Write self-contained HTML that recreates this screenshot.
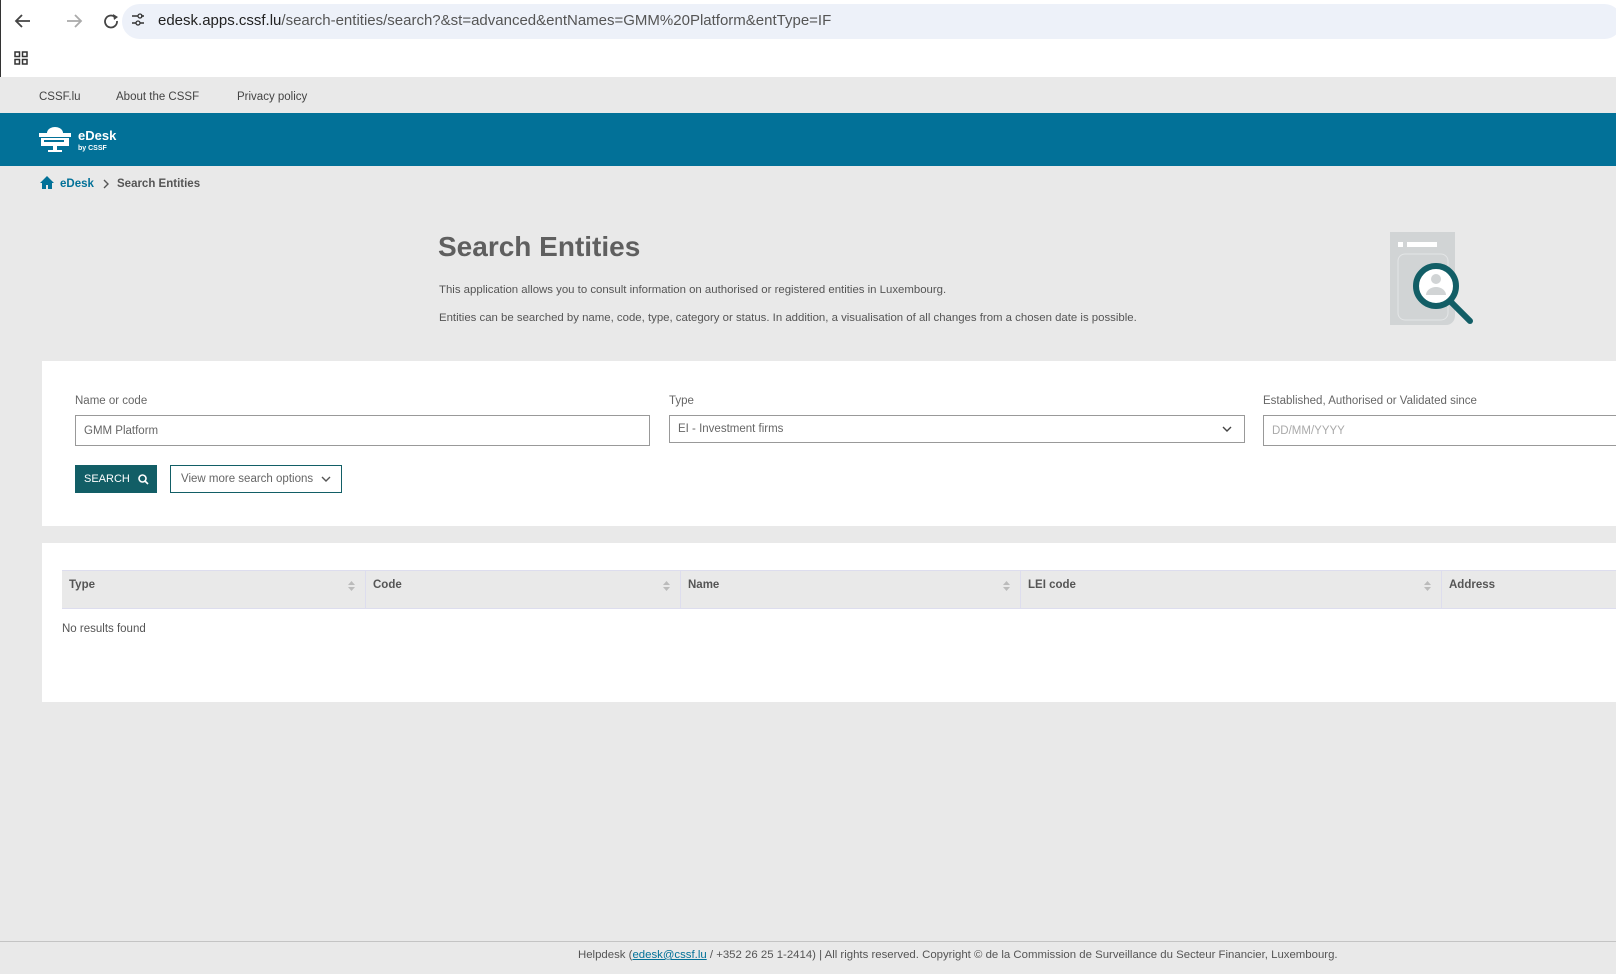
<!DOCTYPE html>
<html><head><meta charset="utf-8">
<style>
*{box-sizing:border-box;margin:0;padding:0}
body{width:1616px;height:974px;overflow:hidden;background:#e9e9e9;font-family:"Liberation Sans",sans-serif;color:#555;position:relative}
.abs{position:absolute}
.chrome{left:0;top:0;width:1616px;height:77px;background:#fff;border-left:1px solid #333}
.url{left:122px;top:4px;width:1500px;height:35px;background:#edf1f9;border-radius:18px}
.nav{left:0;top:77px;width:1616px;height:36px;background:#e9e9e9;font-size:11.5px;color:#444}
.hdr{left:0;top:113px;width:1616px;height:53px;background:#027198}
.card{background:#fff}
label{position:absolute;font-size:11.5px;color:#666}
.inp{position:absolute;border:1px solid #999;background:#fff;font-size:11.5px;color:#666;padding-left:8px;display:flex;align-items:center}
.th{position:absolute;top:0;height:38px;border-right:1px solid #dde;font-size:11.5px;font-weight:bold;color:#555;padding:8px 0 0 7px}
.sort{position:absolute;right:10px;top:9px;width:7px}
</style></head><body>
<div class="abs chrome"></div>
<div class="abs url"></div>
<svg class="abs" style="left:14px;top:12px" width="110" height="18" viewBox="0 0 110 18">
<path d="M16 9H3M8 3L2 9l6 6" stroke="#444" stroke-width="1.8" fill="none"/>
<path d="M53 9h13M61 3l6 6-6 6" stroke="#aaa" stroke-width="1.8" fill="none"/>
<path d="M101 5a6 6 0 1 0 2 4" stroke="#444" stroke-width="1.8" fill="none"/><path d="M99 2l5 3-4 3z" fill="#444"/>
</svg>
<svg class="abs" style="left:130px;top:12px" width="16" height="16"><path d="M2 4h6M2 11h4M11 4h3M10 11h4" stroke="#333" stroke-width="1.5"/><circle cx="10" cy="4" r="2" fill="none" stroke="#333" stroke-width="1.3"/><circle cx="8" cy="11" r="2" fill="none" stroke="#333" stroke-width="1.3"/></svg>
<div class="abs" style="left:158px;top:12px;font-size:15px;color:#222">edesk.apps.cssf.lu<span style="color:#555">/search-entities/search?&amp;st=advanced&amp;entNames=GMM%20Platform&amp;entType=IF</span></div>
<svg class="abs" style="left:14px;top:51px" width="14" height="14"><g fill="none" stroke="#333" stroke-width="1.5"><rect x="1" y="1" width="4.5" height="4.5"/><rect x="8.5" y="1" width="4.5" height="4.5"/><rect x="1" y="8.5" width="4.5" height="4.5"/><rect x="8.5" y="8.5" width="4.5" height="4.5"/></g></svg>
<div class="abs nav"><span class="abs" style="left:39px;top:14px">CSSF.lu</span><span class="abs" style="left:116px;top:14px">About the CSSF</span><span class="abs" style="left:237px;top:14px">Privacy policy</span></div>
<div class="abs hdr">
<svg class="abs" style="left:38px;top:13px" width="34" height="28" viewBox="0 0 34 28"><path d="M9 7a8 6 0 0 1 16 0z" fill="#fff"/><rect x="1" y="7" width="32" height="4" fill="#fff"/><rect x="3" y="12" width="28" height="8" fill="#fff"/><rect x="6" y="14" width="20" height="2" fill="#027198"/><rect x="15" y="20" width="4" height="4" fill="#fff"/><rect x="10" y="24" width="14" height="2" fill="#fff"/></svg>
<div class="abs" style="left:78px;top:15px;color:#fff;font-weight:bold;font-size:13px">eDesk</div>
<div class="abs" style="left:78px;top:32px;color:#fff;font-size:7px;font-weight:bold">by CSSF</div>
</div>
<svg class="abs" style="left:40px;top:176px" width="14" height="13"><path d="M7 0L0 7h2v6h4V9h2v4h4V7h2z" fill="#027198"/></svg>
<div class="abs" style="left:60px;top:178px;font-size:11.5px;font-weight:bold;color:#027198">eDesk</div>
<svg class="abs" style="left:102px;top:179px" width="8" height="10"><path d="M2 1l4 4-4 4" stroke="#555" stroke-width="1.4" fill="none"/></svg>
<div class="abs" style="left:117px;top:178px;font-size:11.5px;font-weight:bold;color:#555">Search Entities</div>
<div class="abs" style="left:438px;top:231px;font-size:28px;font-weight:bold;color:#5f5f5f">Search Entities</div>
<div class="abs" style="left:439px;top:284px;font-size:11.4px;color:#555">This application allows you to consult information on authorised or registered entities in Luxembourg.</div>
<div class="abs" style="left:439px;top:312px;font-size:11.4px;color:#555">Entities can be searched by name, code, type, category or status. In addition, a visualisation of all changes from a chosen date is possible.</div>
<svg class="abs" style="left:1388px;top:231px" width="90" height="96" viewBox="0 0 90 96"><path d="M2 1h65v84a9 9 0 0 1-9 9H2z" fill="#d1d4d5"/><rect x="10" y="11" width="5" height="5" fill="#fff"/><rect x="19" y="11" width="30" height="5" fill="#fff"/><rect x="10" y="23" width="50" height="66" rx="7" fill="none" stroke="#e4e6e7" stroke-width="1"/><circle cx="48" cy="55" r="20" fill="#fff" stroke="#125e66" stroke-width="6"/><circle cx="48" cy="48" r="5" fill="#d1d4d5"/><path d="M38 64a10 8 0 0 1 20 0z" fill="#d1d4d5"/><path d="M62 70l20 20" stroke="#125e66" stroke-width="6" stroke-linecap="round"/></svg>
<div class="abs card" style="left:42px;top:361px;width:1580px;height:165px">
<label style="left:33px;top:34px">Name or code</label>
<div class="inp" style="left:33px;top:54px;width:575px;height:31px">GMM Platform</div>
<label style="left:627px;top:34px">Type</label>
<div class="inp" style="left:627px;top:54px;width:576px;height:28px">EI - Investment firms<svg style="position:absolute;right:12px;top:10px" width="10" height="7"><path d="M1 1l4 4 4-4" stroke="#444" stroke-width="1.4" fill="none"/></svg></div>
<label style="left:1221px;top:34px">Established, Authorised or Validated since</label>
<div class="inp" style="left:1221px;top:54px;width:400px;height:31px;color:#aaa">DD/MM/YYYY</div>
<div class="abs" style="left:33px;top:104px;width:82px;height:28px;background:#125e66;color:#fff;font-size:11px;padding:8px 0 0 9px">SEARCH<svg style="position:absolute;left:63px;top:9px" width="11" height="11"><circle cx="4.5" cy="4.5" r="3.5" fill="none" stroke="#fff" stroke-width="1.6"/><path d="M7 7l3 3" stroke="#fff" stroke-width="1.6"/></svg></div>
<div class="abs" style="left:128px;top:104px;width:172px;height:28px;border:1px solid #125e66;font-size:11.5px;color:#666;padding:7px 0 0 10px">View more search options<svg style="position:absolute;left:150px;top:10px" width="10" height="7"><path d="M1 1l4 4 4-4" stroke="#555" stroke-width="1.4" fill="none"/></svg></div>
</div>
<div class="abs card" style="left:42px;top:543px;width:1580px;height:159px">
<div class="abs" style="left:20px;top:27px;width:1560px;height:39px;background:#e9e9e9;border-top:1px solid #dde;border-bottom:1px solid #dde">
<div class="th" style="left:0;width:304px">Type<svg class="sort" height="12"><path d="M0 5l3.5-4 3.5 4zM0 7l3.5 4 3.5-4z" fill="#bbb"/></svg></div>
<div class="th" style="left:304px;width:315px">Code<svg class="sort" height="12"><path d="M0 5l3.5-4 3.5 4zM0 7l3.5 4 3.5-4z" fill="#bbb"/></svg></div>
<div class="th" style="left:619px;width:340px">Name<svg class="sort" height="12"><path d="M0 5l3.5-4 3.5 4zM0 7l3.5 4 3.5-4z" fill="#bbb"/></svg></div>
<div class="th" style="left:959px;width:421px">LEI code<svg class="sort" height="12"><path d="M0 5l3.5-4 3.5 4zM0 7l3.5 4 3.5-4z" fill="#bbb"/></svg></div>
<div class="th" style="left:1380px;width:180px;border:none">Address</div>
</div>
<div class="abs" style="left:20px;top:80px;font-size:11.5px;color:#555">No results found</div>
</div>
<div class="abs" style="left:0;top:941px;width:1616px;height:1px;background:#c4c4c4"></div>
<div class="abs" style="left:578px;top:949px;white-space:nowrap;font-size:11.4px;color:#555">Helpdesk (<span style="color:#027198;text-decoration:underline">edesk@cssf.lu</span> / +352 26 25 1-2414) | All rights reserved. Copyright © de la Commission de Surveillance du Secteur Financier, Luxembourg.</div>
</body></html>
